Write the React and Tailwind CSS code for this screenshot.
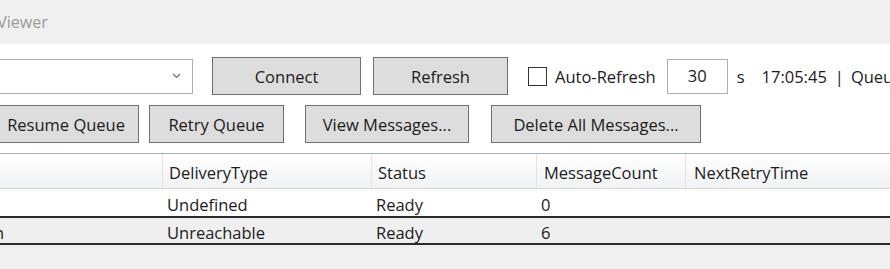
import React from 'react';

const font = { fontFamily: '"Open Sans", "Noto Sans", sans-serif' };

const Button = ({ children, className = '' }) => (
  <button
    type="button"
    className={`h-[38px] shrink-0 border border-[#707070] bg-[#dddddd] pt-[3px] text-[16.5px] text-[#1b1b1b] ${className}`}
  >
    {children}
  </button>
);

const rows = [
  { name: '', type: 'Undefined', status: 'Ready', count: '0', retry: '', selected: false },
  { name: 'Submission', type: 'Unreachable', status: 'Ready', count: '6', retry: '', selected: true },
];

const QueueViewer = () => {
  return (
    <div className="w-[890px] h-[269px] overflow-hidden bg-[#f0f0f0] flex flex-col" style={font}>
      {/* Title bar */}
      <div className="h-[44px] shrink-0 flex items-center">
        <span className="-ml-[57px] text-[16px] text-[#9a9a9a] whitespace-nowrap">Queue Viewer</span>
      </div>

      <div className="bg-white flex flex-col">
        {/* Connection row */}
        <div className="mt-[13px] h-[38px] flex items-center whitespace-nowrap text-[16.5px] text-[#1b1b1b]">
          <div className="-ml-[40px] w-[233px] h-[35px] shrink-0 border border-[#abadb3] bg-white flex items-center justify-end pr-[11px]">
            <svg width="9" height="6" viewBox="0 0 9 6" fill="none">
              <path d="M1 1l3.5 3.5L8 1" stroke="#6d6d6d" strokeWidth="1.2" />
            </svg>
          </div>
          <Button className="ml-[19px] w-[149px]">Connect</Button>
          <Button className="ml-[12px] w-[135px]">Refresh</Button>
          <div className="ml-[20px] w-[19px] h-[19px] shrink-0 border border-[#333333] bg-white" />
          <span className="ml-[8px] pt-[2px]">Auto-Refresh</span>
          <div className="ml-[11px] w-[61px] h-[35px] shrink-0 border border-[#abadb3] bg-white flex items-center justify-center">
            30
          </div>
          <span className="ml-[9px] pt-[2px]">s</span>
          <span className="ml-[17px] pt-[2px]">17:05:45</span>
          <span className="ml-[8px] pt-[2px]">|</span>
          <span className="ml-[7px] pt-[2px]">Queues: 2</span>
        </div>

        {/* Action row */}
        <div className="mt-[10px] h-[38px] flex items-center whitespace-nowrap">
          <Button className="-ml-[40px] w-[179px] text-right pr-[13px]">Resume Queue</Button>
          <Button className="ml-[10px] w-[135px]">Retry Queue</Button>
          <Button className="ml-[21px] w-[164px]">View Messages...</Button>
          <Button className="ml-[22px] w-[210px]">Delete All Messages...</Button>
        </div>

        <div className="h-[10px]" />
      </div>

      {/* Grid */}
      <div className="bg-white text-[16.5px] text-[#1b1b1b] whitespace-nowrap">
        <div className="h-[36px] flex border-t border-b border-t-[#a3b5c9] border-b-[#d5d5d5] bg-gradient-to-b from-white to-[#f1f2f4]">
          <div className="w-[163px] shrink-0 border-r border-[#e3e3e3]" />
          <div className="w-[209px] shrink-0 border-r border-[#e3e3e3] pl-[6px] pt-[5px] flex items-center">DeliveryType</div>
          <div className="w-[165px] shrink-0 border-r border-[#e3e3e3] pl-[6px] pt-[5px] flex items-center">Status</div>
          <div className="w-[149px] shrink-0 border-r border-[#e3e3e3] pl-[7px] pt-[5px] flex items-center">MessageCount</div>
          <div className="flex-1 pl-[8px] pt-[5px] flex items-center">NextRetryTime</div>
        </div>
        {rows.map((r, i) => (
          <div
            key={i}
            className={`flex ${
              r.selected ? 'h-[29px] bg-[#efefef] border-y-2 border-[#2b2b2b]' : 'h-[27px] bg-white'
            }`}
          >
            <div className="w-[163px] shrink-0 overflow-hidden pt-[5px] flex items-center">
              <div className="-ml-[96px] w-[100px] shrink-0 text-right">{r.name}</div>
            </div>
            <div className="w-[209px] shrink-0 pl-[4px] pt-[5px] flex items-center">{r.type}</div>
            <div className="w-[165px] shrink-0 pl-[4px] pt-[5px] flex items-center">{r.status}</div>
            <div className="w-[149px] shrink-0 pl-[4px] pt-[5px] flex items-center">{r.count}</div>
            <div className="flex-1 pl-[4px] pt-[5px] flex items-center">{r.retry}</div>
          </div>
        ))}
      </div>
    </div>
  );
};

export default function App() {
  return <QueueViewer />;
}
